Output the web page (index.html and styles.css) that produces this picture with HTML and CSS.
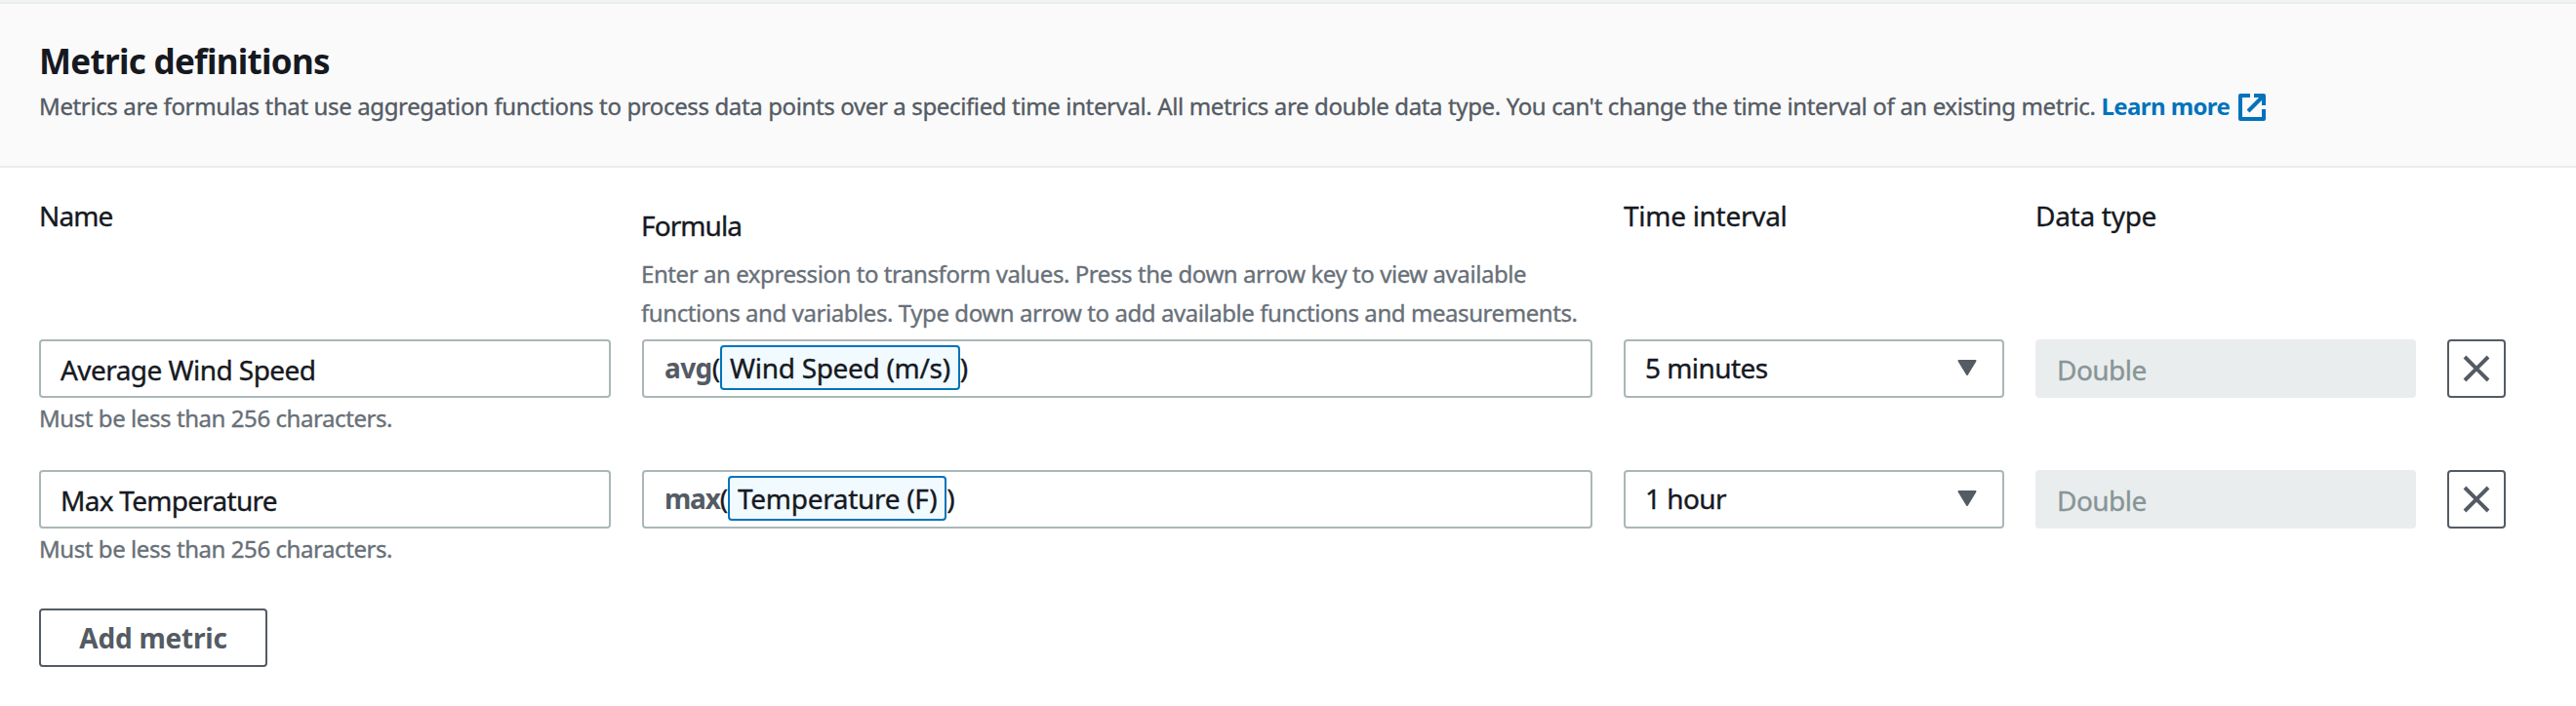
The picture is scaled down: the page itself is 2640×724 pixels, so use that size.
FILE: index.html
```html
<!DOCTYPE html>
<html lang="en">
<head>
<meta charset="utf-8">
<title>Metric definitions</title>
<link rel="stylesheet" href="styles.css">
</head>
<body>
<section class="panel">
  <header class="panel-header">
    <h2 class="title">Metric definitions</h2>
    <p class="description"><span>Metrics are formulas that use aggregation functions to process data points over a specified time interval. All metrics are double data type. You can't change the time interval of an existing metric.</span><a class="link"><span>Learn more</span><svg class="external" viewBox="0 0 28 28"><path d="M12 2H2v24h24V16M16 2h10v10M25 3 10 18" fill="none" stroke="currentColor" stroke-width="4" stroke-linejoin="round"/></svg></a></p>
  </header>
  <div class="panel-body">
    <div class="grid labels">
      <div class="label tight">Name</div>
      <div class="formula-label">
        <div class="label tight">Formula</div>
        <p class="hint">Enter an expression to transform values. Press the down arrow key to view available<br>functions and variables. Type down arrow to add available functions and measurements.</p>
      </div>
      <div class="label">Time interval</div>
      <div class="label">Data type</div>
    </div>
    <div class="grid row">
      <div>
        <div class="field name-field">Average Wind Speed</div>
        <p class="constraint">Must be less than 256 characters.</p>
      </div>
      <div class="field formula-field"><b class="fn avg">avg</b><span>(</span><span class="token">Wind Speed (m/s)</span><span>)</span></div>
      <div class="field select"><span>5 minutes</span><svg class="caret" viewBox="0 0 20 16"><path d="M1.500 1h17L10 15z" fill="currentColor" stroke="currentColor" stroke-width="2" stroke-linejoin="round"/></svg></div>
      <div class="field disabled">Double</div>
      <button class="remove" aria-label="Remove"><svg viewBox="0 0 28 28"><path d="M2 2 26 26M26 2 2 26" fill="none" stroke="currentColor" stroke-width="4"/></svg></button>
    </div>
    <div class="grid row">
      <div>
        <div class="field name-field narrow">Max Temperature</div>
        <p class="constraint">Must be less than 256 characters.</p>
      </div>
      <div class="field formula-field"><b class="fn max">max</b><span>(</span><span class="token">Temperature (F)</span><span>)</span></div>
      <div class="field select"><span>1 hour</span><svg class="caret" viewBox="0 0 20 16"><path d="M1.500 1h17L10 15z" fill="currentColor" stroke="currentColor" stroke-width="2" stroke-linejoin="round"/></svg></div>
      <div class="field disabled">Double</div>
      <button class="remove" aria-label="Remove"><svg viewBox="0 0 28 28"><path d="M2 2 26 26M26 2 2 26" fill="none" stroke="currentColor" stroke-width="4"/></svg></button>
    </div>
    <button class="add">Add metric</button>
  </div>
</section>
</body>
</html>
```
FILE: styles.css
```css
* { box-sizing: border-box; }
body {
  margin: 0;
  background: #fff;
  color: #16191f;
  font-family: "Noto Sans", "Open Sans", sans-serif;
  font-size: 28px;
  white-space: nowrap;
  -webkit-text-stroke: 0.35px currentColor;
}
h2, p { margin: 0; }
.panel { border-top: 2px solid #f2f3f3; }
.panel-header {
  height: 170px;
  padding: 37px 40px 0;
  background: #fafafa;
  border-top: 2px solid #eaeded;
  border-bottom: 2px solid #eaeded;
}
.title {
  font-size: 35px;
  line-height: 44px;
  font-weight: 700;
  letter-spacing: -0.7px;
  -webkit-text-stroke: 0;
}
.description {
  display: flex;
  margin-top: 6px;
  font-size: 24px;
  line-height: 36px;
  letter-spacing: -0.37px;
  color: #545b64;
}
.link {
  display: flex;
  margin-left: 6px;
  color: #0073bb;
  font-weight: 700;
  letter-spacing: -0.6px;
  -webkit-text-stroke: 0;
}
.external { width: 28px; height: 28px; margin: 5px 0 0 9px; }
.panel-body { padding: 27px 40px 0; }
.grid {
  display: grid;
  grid-template-columns: 586px 974px 390px 390px 60px;
  column-gap: 32px;
  align-items: start;
}
.labels { height: 149px; }
.label { line-height: 44px; letter-spacing: -0.28px; }
.tight { letter-spacing: -0.9px; }
.formula-label { padding-top: 10px; }
.formula-label .tight, .hint { margin-left: -1px; }
.hint {
  margin-top: 8px;
  font-size: 24px;
  line-height: 40px;
  letter-spacing: -0.43px;
  color: #687078;
}
.row { height: 134px; }
.field {
  display: flex;
  align-items: center;
  height: 60px;
  padding: 0 20px;
  border: 2px solid #aab7b8;
  border-radius: 4px;
  line-height: 44px;
  letter-spacing: -0.55px;
}
.name-field { padding-top: 2px; }
.narrow { letter-spacing: -0.72px; }
.constraint {
  margin-top: 3px;
  font-size: 24px;
  line-height: 36px;
  letter-spacing: -0.43px;
  color: #687078;
}
.formula-field { padding-left: 21px; padding-bottom: 2px; letter-spacing: 0; }
.fn { color: #545b64; -webkit-text-stroke: 0; }
.avg { letter-spacing: -0.6px; }
.max { letter-spacing: -1.2px; }
.token {
  display: flex;
  align-items: center;
  height: 46px;
  padding: 0 8px;
  background: #f1faff;
  border: 2px solid #0073bb;
  border-radius: 4px;
  letter-spacing: -0.3px;
}
.select { justify-content: space-between; padding-right: 26px; padding-bottom: 2px; }
.caret { width: 20px; height: 16px; color: #545b64; }
.disabled {
  padding-top: 2px;
  padding-left: 22px;
  border: 0;
  background: #eaeded;
  color: #879596;
}
.remove, .add {
  display: flex;
  align-items: center;
  justify-content: center;
  height: 60px;
  padding: 0;
  background: #fff;
  border: 2px solid #545b64;
  border-radius: 4px;
  color: #545b64;
  font: 700 28px/44px "Noto Sans", sans-serif;
  -webkit-text-stroke: 0;
}
.remove { width: 60px; }
.remove svg { width: 28px; height: 28px; }
.add { width: 234px; margin-top: 8px; letter-spacing: -0.2px; }
```
